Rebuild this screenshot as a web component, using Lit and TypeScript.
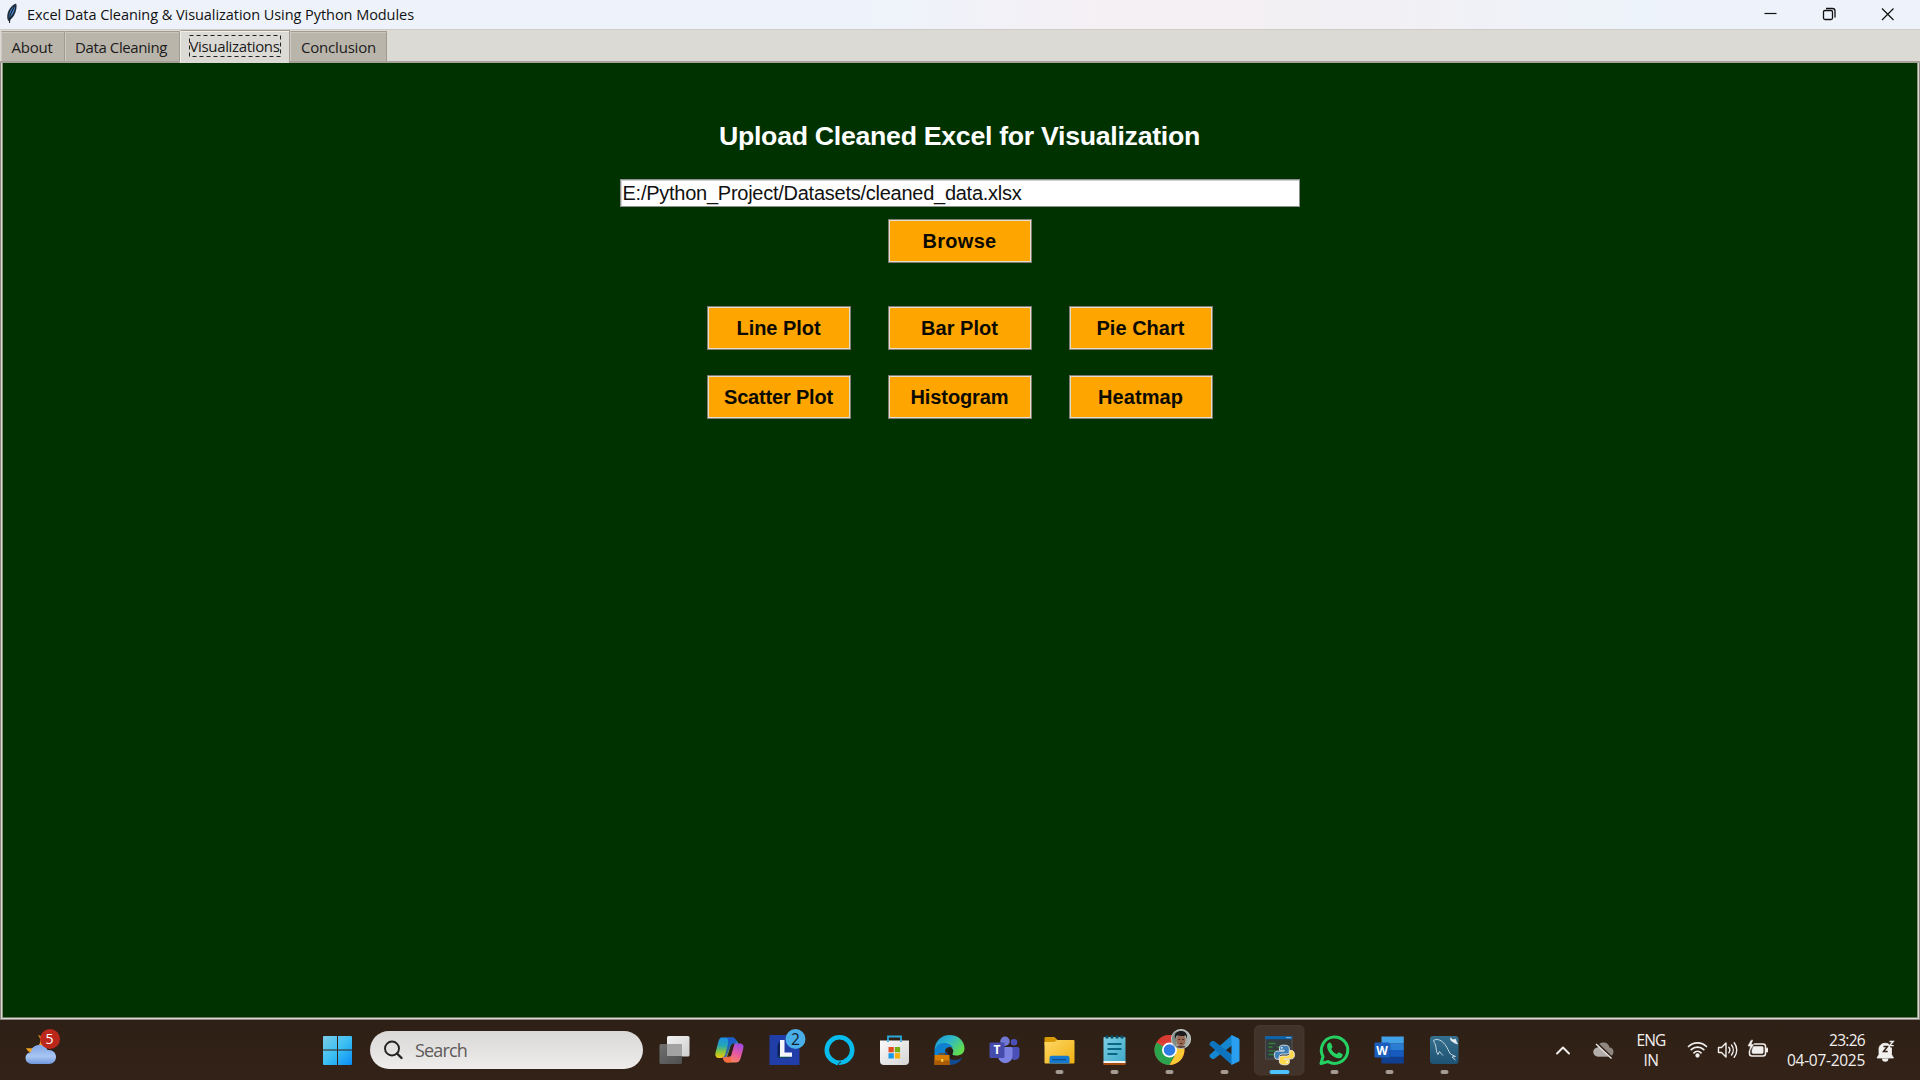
import { LitElement, html, css, svg, TemplateResult, SVGTemplateResult } from "lit";
import { customElement, property } from "lit/decorators.js";

/** One line of text whose letter spacing is adjusted so it fills a given width. */
@customElement("fit-text")
class FitText extends LitElement {
  static styles = css`
    :host { display: inline-block; white-space: nowrap; }
    .line { display: inline-block; }
  `;
  @property({ type: Number }) width = 0;
  @property() text = "";

  render() {
    return html`<span class="line">${this.text}</span>`;
  }

  updated() {
    const line = this.renderRoot.querySelector<HTMLElement>(".line")!;
    line.style.letterSpacing = "0";
    const natural = line.getBoundingClientRect().width;
    const gap = (this.width - natural) / this.text.length;
    line.style.letterSpacing = `${gap.toFixed(3)}px`;
  }
}

const fit = (text: string, width: number) =>
  html`<fit-text .text=${text} .width=${width}></fit-text>`;

interface AppIcon {
  name: string;
  art: SVGTemplateResult;
  state?: "open" | "active";
}

/* Icon art is drawn around the origin, one unit per pixel. */
const ICONS: AppIcon[] = [
  {
    name: "Task view",
    art: svg`
      <rect x="-7.5" y="-14" width="22.5" height="20.5" rx="1.5" fill="url(#tvLight)"/>
      <rect x="-15" y="-6" width="22.5" height="20" rx="1.5" fill="url(#tvDark)"/>
      <rect x="-7.5" y="-6" width="15" height="12" fill="#a3a3a3"/>`,
  },
  {
    name: "Copilot",
    art: svg`
      <path d="M-8-12.5h12c2.500 3 3.500 2.500 5 6.500l-4 0c-3 0-3.800 1.500-4.700 4.500l-2 6.500c-.8 2.500-2 3-3.700 3h-5c-3.500 0-4.300-2.500-3.400-6l2.600-10c.8-3 1.800-4.500 3.200-4.500z" fill="url(#cpA)"/>
      <path d="M-3-12.500h6.500c1.800 0 2.600 1.500 3.200 3.500l.8 2.500h-3c-2.500 0-3.500 1.500-4.300 4L-3 7c-1 1-3 1-5 1 3-1 3.500-3 4.200-5.500L-1.500-6c.6-3-.1-5.500-1.500-6.500z" fill="#1b4bc4" opacity=".75"/>
      <path d="M8-6.500h2.500c3.200 0 4 2.300 3.200 5.500l-2.500 9c-1 3-2.200 4.500-5 4.500H-2c-2.500 0-3.600-1.500-4.200-3.500L-7 7.500h2.500C-2 7.500-1 6-.2 3.500l2-6.300C2.700-5.500 4-6.500 8-6.500z" fill="url(#cpB)"/>
      <path d="M-7 7.500h3.500c2 0 3-.5 3.800-2.500L2 9c.5 1.500-.5 3.500-2 3.500h-2c-2.500 0-3.600-1.500-4.200-3.500z" fill="#f4683c" opacity=".85"/>
      <path d="M-2 6.500L1.500-4.500C2-6 3-6.500 5-6.500L2 4.500c-.6 2-1.600 2.500-4 2z" fill="#2e2016"/>`,
  },
  {
    name: "Lively",
    art: svg`
      <rect x="-15" y="-15" width="30" height="30" fill="#203da8"/>
      <path d="M-4.500-9v13.500L-7 8V-5z" fill="#0d2157"/><path d="M-4 4.500h11L5 8H-7z" fill="#0a4a56"/>
      <path d="M-4.500-10h4.500V2.500h7.500V6.700h-12z" fill="#f4f5fa"/>
      <circle cx="11" cy="-11" r="10" fill="#4aaee8"/>
      <text x="11" y="-5.200" text-anchor="middle" class="badge-dark">2</text>`,
  },
  {
    name: "Alexa",
    art: svg`
      <circle cx="0" cy="0" r="12.700" fill="none" stroke="#07bdee" stroke-width="4.600"/>
      <path d="M-4 15c1-3 0-5-5-8l5 3.800c3 1.500 3.200 3 2 4.500z" fill="#07bdee"/>
      <path d="M-1.300 15.300c.4-2.300 1-2.800 2.800-3.200" fill="none" stroke="#2e2016" stroke-width=".9"/>`,
  },
  {
    name: "Microsoft Store",
    art: svg`
      <path d="M-6.500-9v-4.500h13V-9" fill="none" stroke="#2aa8dc" stroke-width="1.800"/>
      <path d="M-14.500-9.500h29v20.500a4 4 0 0 1-4 4h-21a4 4 0 0 1-4-4z" fill="url(#store)"/>
      <path d="M-6.500-9.500v1.500M6.500-9.500v1.500" stroke="#2aa8dc" stroke-width="1.800"/>
      <rect x="-6" y="-3" width="5.300" height="5.300" fill="#e34d26"/><rect x=".3" y="-3" width="5.300" height="5.300" fill="#77b011"/>
      <rect x="-6" y="3.200" width="5.300" height="5.300" fill="#1499e8"/><rect x=".3" y="3.200" width="5.300" height="5.300" fill="#f7b00d"/>`,
  },
  {
    name: "Edge",
    art: svg`
      <path d="M-15 1C-15-9-8-15 0-15 9-15 15-9 15-1.500 15 3 11.500 5.500 7 5.500c-4 0-5-1.200-3.500-2.700C5.500-1-1-7-8-5c-4 1-6.500 3.500-7 6z" fill="url(#edgeA)"/>
      <path d="M-15 2c.5-5 4-9 9-9 5 0 8 2 9.500 5C1-4-4-3-4.500 1c-.2 2 0 3 .5 4h-11z" fill="#0f7fd0"/>
      <path d="M-4.500 1C-5 6-1 10 5 10c3.500 0 6-1.200 7.800-2.500C11 12 6 15 0 15h-1V5z" fill="#114b92"/>
      <path d="M-1.800 0A3 3 0 0 1 3.500 2c-1.500 2-1 3.500 1.500 4.500L0 8z" fill="#241b18"/>
      <rect x="-15" y="5" width="15" height="10" fill="#d67c05"/><rect x="-15" y="10.500" width="15" height="4.500" fill="#a95a05"/>
      <path d="M-10 5V3.800h5V5" fill="none" stroke="#7b430a" stroke-width="1.200"/><rect x="-8.300" y="9" width="2" height="2.800" fill="#ffd54a"/>`,
  },
  {
    name: "Teams",
    art: svg`
      <circle cx="9.500" cy="-7.700" r="3.300" fill="#4a50b8"/>
      <path d="M6-3h7a2 2 0 0 1 2 2v6.500a4.500 4.500 0 0 1-9 0z" fill="#4a50b8"/>
      <circle cx=".5" cy="-8.700" r="4.700" fill="#7078d4"/>
      <path d="M-6.500-3H6.500a1.500 1.500 0 0 1 1.500 1.500V6A7.200 7.200 0 0 1-6.500 6z" fill="#7a81e0"/>
      <rect x="-15" y="-7.500" width="15" height="15.500" rx="1.300" fill="#464cab"/>
      <text x="-7.500" y="4.300" text-anchor="middle" class="glyph teams">T</text>`,
  },
  {
    name: "File Explorer",
    state: "open",
    art: svg`
      <path d="M-15-12a1.500 1.500 0 0 1 1.500-1h8.300l3.400 3V-5H-15z" fill="#d79a06"/>
      <path d="M-15-8h10l2.500-2H14a1 1 0 0 1 1 1v21.500a1 1 0 0 1-1 1h-28a1 1 0 0 1-1-1z" fill="url(#folder)"/>
      <path d="M-10 13.500V8a2.200 2.200 0 0 1 2.200-2.200H7.800A2.200 2.200 0 0 1 10 8v5.500z" fill="#1479cf"/>
      <rect x="-7" y="9" width="13.500" height="1.200" fill="#0a4d8c"/>`,
  },
  {
    name: "Notepad",
    state: "open",
    art: svg`
      <rect x="-11" y="-13" width="22" height="25" rx="1" fill="url(#note)"/>
      <rect x="-11" y="11" width="22" height="2.500" fill="#f2f2f2"/><rect x="-11" y="13" width="22" height="2" fill="#a34e10"/>
      <g fill="#0c5266"><circle cx="-7.500" cy="-13" r="1.700"/><circle cx="-2.500" cy="-13" r="1.700"/><circle cx="2.500" cy="-13" r="1.700"/><circle cx="7.500" cy="-13" r="1.700"/></g>
      <path d="M-7-6H7M-7-1H7M-7 4H3" stroke="#0b6884" stroke-width="2"/>`,
  },
  {
    name: "Chrome",
    state: "open",
    art: svg`
      <circle r="15" fill="#e0443a"/>
      <path d="M0 0L-13-7.500A15 15 0 0 0 0 15L6.500 3.700z" fill="#2ba24c"/>
      <path d="M0 15A15 15 0 0 0 13.500-6.500L0-7L6.500 3.700z" fill="#fcc934"/>
      <path d="M-13-7.500A15 15 0 0 1 13-7.500H0z" fill="#d93a31"/>
      <circle r="7.500" fill="#fff"/><circle r="5.800" fill="#2f7be6"/>
      <g clip-path="url(#face)">
        <rect x="1" y="-21" width="21" height="21" fill="#a9b0ac"/>
        <rect x="1" y="-21" width="6" height="21" fill="#7f8b84"/>
        <ellipse cx="11.500" cy="-9.500" rx="4.600" ry="6" fill="#9a6a55"/>
        <path d="M5.500-11c-1-6 2-8 6-8s7 2.500 5.700 8l-1-3.500c-3 .8-6 .5-9 0z" fill="#1d1a1b"/>
        <path d="M3-1l5-3h7l5 4z" fill="#54423d"/>
        <path d="M8.800-10.500h2M12.600-10.500h2M10.300-6.500h2.800" stroke="#4a2b23" stroke-width=".9"/>
      </g>
      <circle cx="11.500" cy="-11" r="9.600" fill="none" stroke="#c9cfd0" stroke-width=".8"/>`,
  },
  {
    name: "Visual Studio Code",
    state: "open",
    art: svg`
      <path d="M7.500-15L-15 5l.2 2 2.300 2 2 0L8-5z" fill="#1587d0"/>
      <path d="M7.500 15L-15-5l.2-2 2.300-2 2 0L8 5z" fill="#0d74bd"/>
      <path d="M7-15l7 3.200a1.700 1.700 0 0 1 1 1.600v20.400a1.700 1.700 0 0 1-1 1.600L7 15z" fill="#2a9ff0"/>`,
  },
  {
    name: "Python",
    state: "active",
    art: svg`
      <rect x="-14" y="-13.500" width="26.500" height="22.500" fill="#353a3d" stroke="#555b5e" stroke-width=".8"/>
      <rect x="-14.300" y="-13.800" width="27" height="3" fill="#0a64ad"/><rect x="6.500" y="-12.800" width="5" height="1" fill="#8dbbe0"/>
      <path d="M-11-6.500h7M-11-3h4M-11 .8h7M-11 4.500h6M-2-3h3" stroke="#2f8136" stroke-width="1.300"/>
      <path d="M4.200-4.800c-4 0-4.200 1.500-4.200 3V.300h4.700v.8h-6.800c-2.500 0-3 2-3 4.200s.8 4 3 4h1.800V7c0-2 1.300-3 3-3h4.600c1.500 0 2.500-1 2.500-2.500v-3.300c0-2-1.600-3-5.600-3z" fill="#3f7fb5" stroke="#e9edf0" stroke-width=".9"/>
      <path d="M5.500 14.800c4 0 4.300-1.500 4.300-3V9.600H5v-.8h7c2.400 0 2.900-2 2.900-4.200s-1-4.100-3-4.100h-1.700V3c0 2-1.300 3-3 3H2.600C1 6-.1 7-.1 8.500v3.300c0 2 1.600 3 5.600 3z" fill="#ffd84c" stroke="#f3efe0" stroke-width=".9"/>
      <circle cx="2.200" cy="-2.200" r=".9" fill="#fff"/><circle cx="7.500" cy="12.200" r=".9" fill="#fff"/>`,
  },
  {
    name: "WhatsApp",
    state: "open",
    art: svg`
      <path d="M-13.500 13.500l2-7A13.200 13.200 0 1 1-6.500 11.600z" fill="none" stroke="#25d062" stroke-width="3" stroke-linejoin="round"/>
      <path d="M-6.500-6.500c1-1.200 2.600-1.300 3.200 0l1.200 3c.4 1-1.300 2-1 2.700C-2 1.500 0 3.200 2 4c1 .4 1.700-2 2.800-1.600l3 1.500c1 .6.300 2.500-.8 3.500C4.500 9.500-.5 7.500-3.500 4.500S-8.800-4-6.500-6.500z" fill="#25d062"/>`,
  },
  {
    name: "Word",
    state: "open",
    art: svg`
      <rect x="-8" y="-13.500" width="22.300" height="7" fill="#41a0e6"/><rect x="-8" y="-6.700" width="22.300" height="7" fill="#2b7cd3"/>
      <rect x="-8" y="0" width="22.300" height="7" fill="#185bbe"/><rect x="-8" y="6.700" width="22.300" height="6.800" fill="#103f91"/>
      <rect x="-8" y="-6" width="9" height="15" fill="#0c3f83" opacity=".5"/>
      <rect x="-15" y="-7.500" width="15" height="15" rx="1.200" fill="#1b5dbe"/>
      <text x="-7.500" y="4.500" text-anchor="middle" class="glyph word">W</text>`,
  },
  {
    name: "MySQL Workbench",
    state: "open",
    art: svg`
      <rect x="-14.500" y="-14" width="28.500" height="28" rx="3" fill="url(#sql)"/>
      <path d="M-10.500-10c4-1.500 8 .5 11 4.500 3 3.800 3.500 7 5.500 9.500l5 2.500-3.500.5 3.500 3M-10.500-10c-1 1.500 1 3 1.500 5C-8-1.500-8.500 2-6.500 4.500l1.500-3C-3.500 3-3 4.500-1.500 5.500" fill="none" stroke="#c3d5df" stroke-width="1" stroke-linejoin="round"/>
      <path d="M6-12l2.500 2 2.500-.8.800 2.800 1.200 2-3-1.200-3.500-2.300z" fill="#e8eff4" stroke="#e8eff4" stroke-width=".8"/>`,
  },
];

const TABS = [
  { label: "About", size: 41, cls: "about" },
  { label: "Data Cleaning", size: 92, cls: "clean" },
  { label: "Visualizations", size: 90, cls: "viz selected" },
  { label: "Conclusion", size: 75, cls: "concl" },
];

const PLOTS = [
  { label: "Line Plot", size: 84 },
  { label: "Bar Plot", size: 77 },
  { label: "Pie Chart", size: 88 },
  { label: "Scatter Plot", size: 109 },
  { label: "Histogram", size: 98 },
  { label: "Heatmap", size: 85 },
];

@customElement("app-root")
class AppRoot extends LitElement {
  static styles = css`
    :host {
      display: flex; flex-direction: column; width: 1920px; height: 1080px; overflow: hidden;
      font-family: "Open Sans", "Noto Sans", sans-serif; color: #111;
    }
    * { box-sizing: border-box; }
    svg { display: block; }

    .titlebar {
      flex: none; height: 29px; display: flex; align-items: center;
      background: linear-gradient(90deg, #eef3fb 0%, #eef3fb 45%, #f5f0f4 58%, #f2f0f4 72%, #edf3fa 85%, #eef3fb 100%);
      padding: 0 .5px 0 5px; font-size: 14.500px;
    }
    .feather { width: 22px; height: 26px; }
    .title { flex: 1; line-height: 29px; }
    .controls { display: flex; }
    .controls svg { width: 58.500px; height: 29px; fill: none; stroke: #111; }

    .tabs {
      flex: none; height: 34px; background: #dcdad5; display: flex; align-items: flex-end;
      border-top: 1px solid #cfccc6; border-bottom: 2px solid #a7a298; padding-left: 1px; font-size: 15px;
    }
    .tab {
      height: 30px; background: #bab5ab; display: flex; align-items: center; justify-content: center;
      border: 1px solid #a19c92; border-left-color: #cfcbc3; border-bottom: 0; box-shadow: inset 0 1px #cac6be;
      color: #1b1b1b; padding: 1px 2px 0 0;
    }
    .about { width: 64px; }
    .clean { width: 115px; padding-right: 3px; }
    .viz { width: 110px; }
    .concl { width: 97px; padding-right: 0; }
    .tab.selected { height: 33px; background: #dcdad5; margin-bottom: -2px; padding: 0 1px 2px 0; box-shadow: inset 0 1px #f0eeea; border-left-color: #f0eeea; }
    .focus { display: flex; align-items: center; justify-content: center; width: 92px; height: 22px; position: relative; }
    .focus svg { position: absolute; inset: 0; }

    .frame {
      flex: 1; background: #003200; border: solid #8d8b80; border-width: 0 1px 1px 1px;
      box-shadow: inset 1px 0 #dcdad5, inset -1px 0 #dcdad5, inset 0 -1px #dcdad5,
        inset 2px 0 #8f9080, inset -2px 0 #8f9080, inset 0 -2px #6f7763;
      display: flex; flex-direction: column; align-items: center; padding-right: 1px;
      font-family: "Liberation Sans", Arial, sans-serif;
    }
    .heading { margin: 55px 0 0; height: 36px; line-height: 36px; font-size: 26.700px; font-weight: 700; color: #fff; }
    .entry {
      margin: 25px 0 0 1px; width: 680px; height: 28px; background: #fff; border: 1px solid #8f8f8f;
      box-shadow: inset 1px 1px #d0d0d0; padding-left: 1.500px; font-size: 20px; line-height: 27px; color: #111;
    }
    .btn {
      width: 144px; height: 44px; background: #ffa500; border: 1px solid #807d70;
      box-shadow: inset 0 0 0 1px #e3ddd0; display: flex; align-items: center; justify-content: center;
      font-size: 20px; font-weight: 700; color: #0a0a00;
    }
    .browse { margin-top: 12px; }
    .grid { margin-top: 43px; display: grid; grid-template-columns: repeat(3, 144px); gap: 25px 37px; }

    .taskbar {
      flex: none; height: 60px; background: linear-gradient(#2e2016, #332218); display: flex; align-items: center; color: #f2f0ee;
    }
    .weather { width: 310px; }
    .start { width: 60px; }
    .search {
      width: 273px; height: 38px; border-radius: 19px; background: linear-gradient(#dad8d6, #eeedec);
      display: flex; align-items: center; font-size: 18px; color: #5c5a59; padding-left: 13px;
    }
    .search svg { width: 32px; height: 30px; }
    .apps { display: flex; margin-left: 3.500px; }
    .tray { display: flex; align-items: center; margin-left: 73.500px; font-size: 15.500px; }
    .lang { width: 60px; text-align: center; line-height: 20px; margin: 0 1px 0 6px; }
    .clock { width: 88px; text-align: right; line-height: 20px; margin: 0 5px 0 5px; }
    .badge-dark { font: 15.500px "Open Sans", sans-serif; fill: #10202c; }
    .badge-light { font: 14px "Open Sans", sans-serif; fill: #fff; }
    .glyph { font-family: "Open Sans", sans-serif; font-weight: 700; fill: #fff; }
    .teams { font-size: 12px; }
    .word { font-size: 12px; }
  `;

  private defs() {
    return svg`<defs>
      <linearGradient id="tvLight" x1="0" y1="0" x2="1" y2="1"><stop stop-color="#f2f2f2"/><stop offset="1" stop-color="#cfcfcf"/></linearGradient>
      <linearGradient id="tvDark" x1="0" y1="0" x2="1" y2="1"><stop stop-color="#707070"/><stop offset="1" stop-color="#4f4f4f"/></linearGradient>
      <linearGradient id="cpA" x1="0" y1="0" x2="0" y2="1"><stop stop-color="#1c8fe8"/><stop offset=".4" stop-color="#25a7b5"/><stop offset=".7" stop-color="#8dc63a"/><stop offset="1" stop-color="#f5c410"/></linearGradient>
      <linearGradient id="cpB" x1=".7" y1="0" x2=".3" y2="1"><stop stop-color="#a34be0"/><stop offset=".5" stop-color="#e85a9d"/><stop offset="1" stop-color="#fb8a55"/></linearGradient>
      <linearGradient id="store" x1="0" y1="0" x2="1" y2="1"><stop stop-color="#fafafa"/><stop offset="1" stop-color="#d5d5d5"/></linearGradient>
      <linearGradient id="edgeA" x1="0" y1="0" x2="1" y2=".6"><stop stop-color="#1590d8"/><stop offset=".5" stop-color="#2fb9c8"/><stop offset="1" stop-color="#62dc4c"/></linearGradient>
      <linearGradient id="folder" x1="0" y1="0" x2="1" y2="1"><stop stop-color="#ffd766"/><stop offset="1" stop-color="#efb010"/></linearGradient>
      <linearGradient id="note" x1="0" y1="0" x2="1" y2="1"><stop stop-color="#7dd0e4"/><stop offset="1" stop-color="#3ea9c8"/></linearGradient>
      <linearGradient id="sql" x1="0" y1="0" x2="0" y2="1"><stop stop-color="#35708f"/><stop offset="1" stop-color="#1f5273"/></linearGradient>
      <clipPath id="face"><circle cx="11.500" cy="-11" r="9.800"/></clipPath>
    </defs>`;
  }

  private appIcon(icon: AppIcon): TemplateResult {
    return html`<svg width="55" height="60" viewBox="-27.5 -30 55 60" role="img" aria-label=${icon.name}>
      ${this.defs()}
      ${icon.state === "active"
        ? svg`<rect x="-25" y="-24.500" width="49.500" height="49.500" rx="5" fill="#41332a" stroke="#4a3c33" stroke-width=".8"/>`
        : null}
      ${icon.art}
      ${icon.state === "open" ? svg`<rect x="-4" y="20" width="8" height="4" rx="2" fill="#a59b95"/>` : null}
      ${icon.state === "active" ? svg`<rect x="-10" y="20" width="20" height="4" rx="2" fill="#4cc2ff"/>` : null}
    </svg>`;
  }

  render() {
    return html`
      <header class="titlebar">
        <svg class="feather" viewBox="0 0 22 26">
          <path d="M11 1.500C7 3 3.500 7 2.500 12c-.5 3-.3 5 .8 7l1.200-.5C8 16 10.500 12 11.300 7c.4-2.500.4-4.500-.3-5.500z" fill="#1c2a3a"/>
          <path d="M10 3.500C7 5.500 4.800 9 4 13.500l-.3 3C6.500 14 9 10.500 9.800 7z" fill="#4a8fd4"/>
          <path d="M9.500 4L5 13.500 4.500 21" fill="none" stroke="#17202a" stroke-width="1.100"/>
        </svg>
        <span class="title">${fit("Excel Data Cleaning & Visualization Using Python Modules", 387)}</span>
        <div class="controls">
          <svg viewBox="0 0 58.5 29"><path d="M20.500 13.500h12" stroke-width="1.200"/></svg>
          <svg viewBox="0 0 58.500 29"><rect x="20.500" y="10.500" width="9" height="9" rx="1.500" stroke-width="1.300"/><path d="M23 8.500h6.500a2.500 2.500 0 0 1 2.500 2.500v6.500" stroke-width="1.300"/></svg>
          <svg viewBox="0 0 58.500 29"><path d="M21 8.500l11.500 11.500M32.500 8.500L21 20" stroke-width="1.200"/></svg>
        </div>
      </header>
      <nav class="tabs">
        ${TABS.map((t) => html`<div class="tab ${t.cls}">
          ${t.cls.includes("selected")
            ? html`<div class="focus"><svg width="92" height="22"><rect x=".5" y=".5" width="91" height="21" fill="none" stroke="#222" stroke-dasharray="4 3"/></svg>${fit(t.label, t.size)}</div>`
            : fit(t.label, t.size)}
        </div>`)}
      </nav>
      <main class="frame">
        <h1 class="heading">${fit("Upload Cleaned Excel for Visualization", 481)}</h1>
        <div class="entry">${fit("E:/Python_Project/Datasets/cleaned_data.xlsx", 399)}</div>
        <div class="btn browse">${fit("Browse", 74)}</div>
        <div class="grid">${PLOTS.map((p) => html`<div class="btn">${fit(p.label, p.size)}</div>`)}</div>
      </main>
      <footer class="taskbar">
        <svg class="weather" width="310" height="60" viewBox="0 0 310 60">
          <defs><linearGradient id="cl" x1="0" y1="0" x2="0" y2="1"><stop stop-color="#7fa6e8"/><stop offset=".6" stop-color="#a9c6f2"/><stop offset="1" stop-color="#6f97dc"/></linearGradient></defs>
          <path d="M38 15c5 6 2 15-12 13 2 5 7 6 12 4l7-8c0-4-3-8-7-9z" fill="#eda022"/>
          <path d="M32 44a6 6 0 0 1-1-12c1-5 4-7 8.500-7 4 0 7 2 8 5 5-.5 8.500 2.500 8.500 7 0 4-3 7-7 7z" fill="url(#cl)"/>
          <circle cx="50" cy="19" r="10" fill="#bc271c"/>
          <text x="49.500" y="24" text-anchor="middle" class="badge-light">5</text>
        </svg>
        <svg class="start" width="60" height="60" viewBox="0 0 60 60">
          <defs><linearGradient id="win" gradientUnits="userSpaceOnUse" x1="13" y1="16" x2="42" y2="45"><stop stop-color="#7ccbe6"/><stop offset=".5" stop-color="#3cc0f4"/><stop offset="1" stop-color="#078df5"/></linearGradient></defs>
          <path d="M13 17a1 1 0 0 1 1-1h13v13.500H13zM28 16h13a1 1 0 0 1 1 1v12.500H28zM13 30.500h14V45H14a1 1 0 0 1-1-1zM28 30.500h14V44a1 1 0 0 1-1 1H28z" fill="url(#win)"/>
        </svg>
        <div class="search">
          <svg viewBox="0 0 32 30"><circle cx="9" cy="13.500" r="7" fill="none" stroke="#232323" stroke-width="1.900"/><path d="M14 18.500l4.500 4.500" stroke="#232323" stroke-width="2.400" stroke-linecap="round"/></svg>
          ${fit("Search", 52)}
        </div>
        <div class="apps">${ICONS.map((i) => this.appIcon(i))}</div>
        <div class="tray">
          <svg width="70" height="60" viewBox="1545 0 70 60">
            <path d="M1557 33.500l6-6 6 6" fill="none" stroke="#f2f0ee" stroke-width="1.900" stroke-linecap="round" stroke-linejoin="round"/>
            <path d="M1598 36.500a4.500 4.500 0 0 1-.5-9c.8-4 3.500-5 6-5 3.500 0 5.500 2 6 5 2.500 0 4 2 4 4.500s-2 4.500-4.500 4.500z" fill="#8f8782"/>
            <path d="M1598 36.500a4.500 4.500 0 0 1-2-8.500c4-1.500 6 0 9 2.500l6 6z" fill="#b3ada9"/>
            <path d="M1597.500 24l15 14.500" stroke="#33231a" stroke-width="2.500"/><path d="M1596 24l15.500 14.500" stroke="#f1eeec" stroke-width="1.300"/>
          </svg>
          <div class="lang"><div>${fit("ENG", 29)}</div><div>${fit("IN", 15)}</div></div>
          <svg width="90" height="60" viewBox="1682.500 0 90 60" fill="none" stroke="#f2f0ee" stroke-width="1.700" stroke-linecap="round">
            <path d="M1689 26.500a13 13 0 0 1 18 0M1691.700 29.700a9 9 0 0 1 12.600 0M1694.500 32.800a5 5 0 0 1 7 0"/><circle cx="1698" cy="35.500" r="1.300" fill="#f2f0ee"/>
            <path d="M1719 27.500h3l4.500-4.500v14l-4.500-4.500h-3z" stroke-width="1.400" stroke-linejoin="round"/>
            <path d="M1729.300 27.200a4.500 4.500 0 0 1 0 5.600M1732 25a8 8 0 0 1 0 10M1734.700 22.800a11.500 11.500 0 0 1 0 14.400" stroke-width="1.400"/>
            <path d="M1755 24h8.500a2.500 2.500 0 0 1 2.500 2.500v7a2.500 2.500 0 0 1-2.500 2.500h-11a2.500 2.500 0 0 1-2.500-2.500v-2.500" stroke-width="1.500"/>
            <path d="M1754 26.500h8.500a1.200 1.200 0 0 1 1.200 1.200v4.600a1.200 1.200 0 0 1-1.200 1.200h-8.800a1.200 1.200 0 0 1-1.200-1.200v-2z" fill="#f2f0ee" stroke-width=".5"/>
            <path d="M1767.500 28.500v3" stroke-width="2"/><path d="M1751.500 20.500l-3 5.500h2.500l-1 5 4-6.500h-2.500l1.500-4z" fill="#f2f0ee" stroke-width=".6"/>
          </svg>
          <div class="clock"><div>${fit("23:26", 36)}</div><div>${fit("04-07-2025", 78)}</div></div>
          <svg width="40" height="60" viewBox="1870 0 40 60">
            <path d="M1877 38l2-3.500V28a6.500 6.500 0 0 1 12.500 0v6.500l2 3.500z" fill="#f2f0ee" stroke="#f2f0ee" stroke-width=".8" stroke-linejoin="round"/>
            <path d="M1882 38.500a3.200 3.200 0 0 0 6.400 0z" fill="#f2f0ee"/>
            <path d="M1887.500 20.500h7v7h-4z" fill="#31221a"/>
            <path d="M1883.500 26.500h4l-4 5h4.200" fill="none" stroke="#31221a" stroke-width="1.500"/><path d="M1889.500 21.500h3.800l-3.800 4.200h4.200" fill="none" stroke="#f2f0ee" stroke-width="1.300"/>
          </svg>
        </div>
      </footer>
    `;
  }
}
